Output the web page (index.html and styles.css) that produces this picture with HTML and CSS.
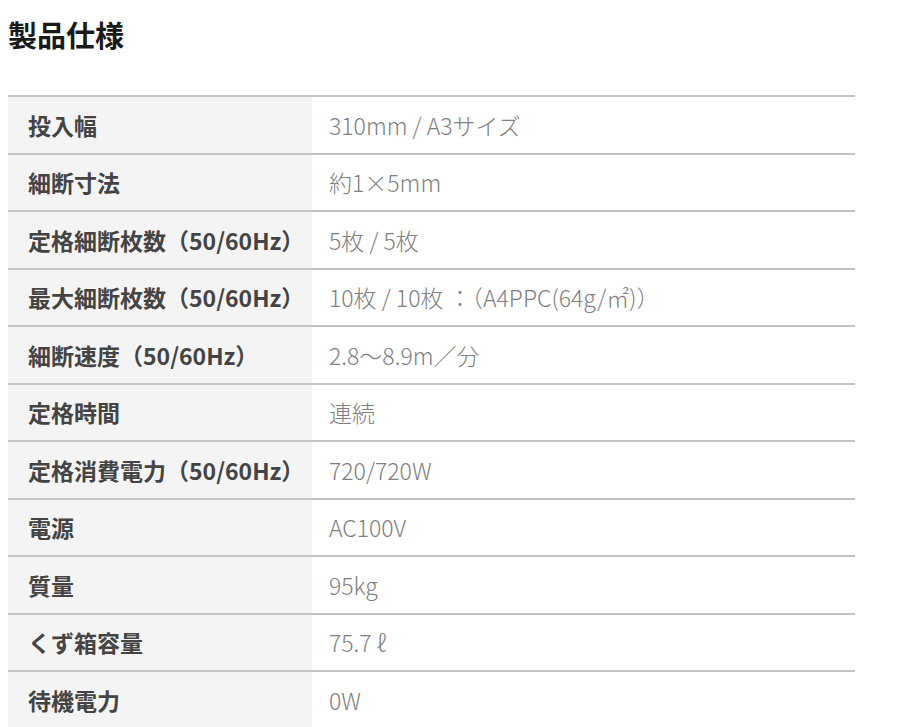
FILE: index.html
```html
<!DOCTYPE html>
<html lang="ja">
<head>
<meta charset="utf-8">
<title>製品仕様</title>
<link rel="stylesheet" href="styles.css">
</head>
<body>
<section class="spec">
  <h2 class="spec-title">製品仕様</h2>
  <table class="spec-table">
    <tbody>
      <tr><th>投入幅</th><td>310mm / A3サイズ</td></tr>
      <tr><th>細断寸法</th><td>約1×5mm</td></tr>
      <tr><th>定格細断枚数（50/60Hz）</th><td>5枚 / 5枚</td></tr>
      <tr><th>最大細断枚数（50/60Hz）</th><td>10枚 / 10枚 ：（A4PPC(64g/㎡)）</td></tr>
      <tr><th>細断速度（50/60Hz）</th><td>2.8〜8.9m／分</td></tr>
      <tr><th>定格時間</th><td>連続</td></tr>
      <tr><th>定格消費電力（50/60Hz）</th><td>720/720W</td></tr>
      <tr><th>電源</th><td>AC100V</td></tr>
      <tr><th>質量</th><td>95kg</td></tr>
      <tr><th>くず箱容量</th><td>75.7 ℓ</td></tr>
      <tr><th>待機電力</th><td>0W</td></tr>
    </tbody>
  </table>
</section>
</body>
</html>
```
FILE: styles.css
```css
html, body {
  margin: 0;
  padding: 0;
  background: #ffffff;
}
body {
  font-family: "Noto Sans CJK JP", "Noto Sans", sans-serif;
  color: #222;
}
.spec {
  padding: 0 45px 0 8px;
}
.spec-title {
  margin: 0;
  padding-top: 16px;
  font-size: 29px;
  line-height: 36px;
  font-weight: 700;
  color: #1a1a1a;
  height: 95px;
  box-sizing: border-box;
}
.spec-table {
  width: 100%;
  border-collapse: collapse;
  border-top: 2px solid #c4c4c4;
}
.spec-table tr {
  border-bottom: 2px solid #c4c4c4;
}
.spec-table th,
.spec-table td {
  height: 55.5px;
  padding: 0;
  text-align: left;
  vertical-align: middle;
  font-size: 23px;
}
.spec-table th {
  width: 284px;
  padding-left: 20px;
  background: #f4f4f4;
  color: #444;
  font-weight: 700;
  white-space: nowrap;
}
.spec-table td {
  padding-left: 17px;
  color: #808080;
  font-weight: 300;
}
```
